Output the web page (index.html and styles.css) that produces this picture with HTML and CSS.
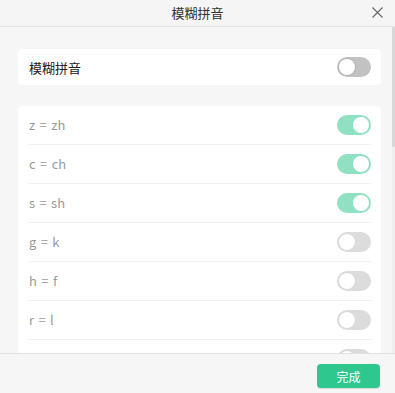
FILE: index.html
```html
<!DOCTYPE html>
<html lang="zh-CN">
<head>
<meta charset="utf-8">
<title>模糊拼音</title>
<link rel="stylesheet" href="styles.css">
</head>
<body>
<div class="dialog">
  <div class="header">
    <span></span>
    <span class="title">模糊拼音</span>
    <span class="close">
      <svg width="11" height="11" viewBox="0 0 11 11"><path d="M0.5 0.5L10.5 10.5M10.5 0.5L0.5 10.5" stroke="#666" stroke-width="1.1" fill="none"/></svg>
    </span>
  </div>
  <div class="middle">
    <div class="content">
      <div class="card master">
        <span class="master-label">模糊拼音</span>
        <span class="toggle off-dark"><span class="knob"></span></span>
      </div>
      <div class="card list">
        <div class="row"><span class="label">z = zh</span><span class="toggle on"><span class="knob"></span></span></div>
        <div class="row"><span class="label">c = ch</span><span class="toggle on"><span class="knob"></span></span></div>
        <div class="row"><span class="label">s = sh</span><span class="toggle on"><span class="knob"></span></span></div>
        <div class="row"><span class="label">g = k</span><span class="toggle off"><span class="knob"></span></span></div>
        <div class="row"><span class="label">h = f</span><span class="toggle off"><span class="knob"></span></span></div>
        <div class="row"><span class="label">r = l</span><span class="toggle off"><span class="knob"></span></span></div>
        <div class="row"><span class="label"></span><span class="toggle off"><span class="knob"></span></span></div>
      </div>
    </div>
    <div class="scrolltrack"><div class="thumb"></div></div>
  </div>
  <div class="footer">
    <button class="done">完成</button>
  </div>
</div>
</body>
</html>
```

FILE: styles.css
```css
* { box-sizing: border-box; }
html, body {
  margin: 0;
  padding: 0;
  width: 395px;
  height: 393px;
  overflow: hidden;
  background: #f6f6f6;
  font-family: "Noto Sans CJK SC", "Noto Sans", sans-serif;
}
.dialog {
  width: 395px;
  height: 393px;
  display: flex;
  flex-direction: column;
  background: #f6f6f6;
}
.header {
  height: 27px;
  flex: none;
  border-bottom: 1px solid #e2e2e2;
  display: grid;
  grid-template-columns: 1fr auto 1fr;
  align-items: center;
  background: #f5f5f5;
}
.title {
  font-size: 13px;
  color: #333;
  line-height: 26px;
}
.close {
  justify-self: end;
  margin-right: 12px;
  display: flex;
  margin-top: -2px;
}
.middle {
  flex: 1;
  min-height: 0;
  display: flex;
}
.content {
  flex: 1;
  min-width: 0;
  overflow: hidden;
  padding: 22px 11px 0 18px;
}
.scrolltrack {
  width: 3px;
  flex: none;
  background: #efefef;
}
.thumb {
  height: 120px;
  background: #d8d8d8;
  border-radius: 1px;
}
.card {
  background: #fff;
  border-radius: 4px;
}
.master {
  height: 36px;
  display: flex;
  align-items: center;
  justify-content: space-between;
  padding: 0 10px 0 11px;
  margin-bottom: 21px;
}
.master-label {
  font-size: 13px;
  color: #222;
}
.list {
  padding: 0 10px;
}
.row {
  height: 39px;
  display: flex;
  align-items: center;
  justify-content: space-between;
  border-bottom: 1px solid #f1f1f1;
  padding-left: 1px;
}
.label {
  font-size: 13px;
  color: #9a9a9a;
  word-spacing: 1.5px;
  margin-top: -2px;
}
.toggle {
  width: 34px;
  height: 20px;
  border-radius: 10px;
  display: flex;
  align-items: center;
  padding: 0 2px;
  flex: none;
}
.knob {
  width: 16px;
  height: 16px;
  border-radius: 50%;
  background: #fff;
}
.toggle.on { background: #8fe1c2; justify-content: flex-end; }
.toggle.off { background: #dcdcdc; }
.toggle.off-dark { background: #c2c2c2; }
.toggle.off-dark .knob { box-shadow: 0 0 0 1px #b5b5b5; }
.toggle.off .knob { box-shadow: 0 0 0 0.5px #d0d0d0; }
.footer {
  height: 40px;
  flex: none;
  border-top: 1px solid #e0e0e0;
  background: #f6f6f6;
  display: flex;
  justify-content: flex-end;
  align-items: flex-start;
  padding: 10px 15px 0 0;
}
.done {
  width: 63px;
  height: 24px;
  border: none;
  border-radius: 4px;
  background: #2ec88f;
  color: #fff;
  font-family: "Noto Sans CJK SC", sans-serif;
  font-size: 12px;
  padding: 0;
  box-shadow: 0 1px 1px rgba(0,0,0,0.12);
}
```
